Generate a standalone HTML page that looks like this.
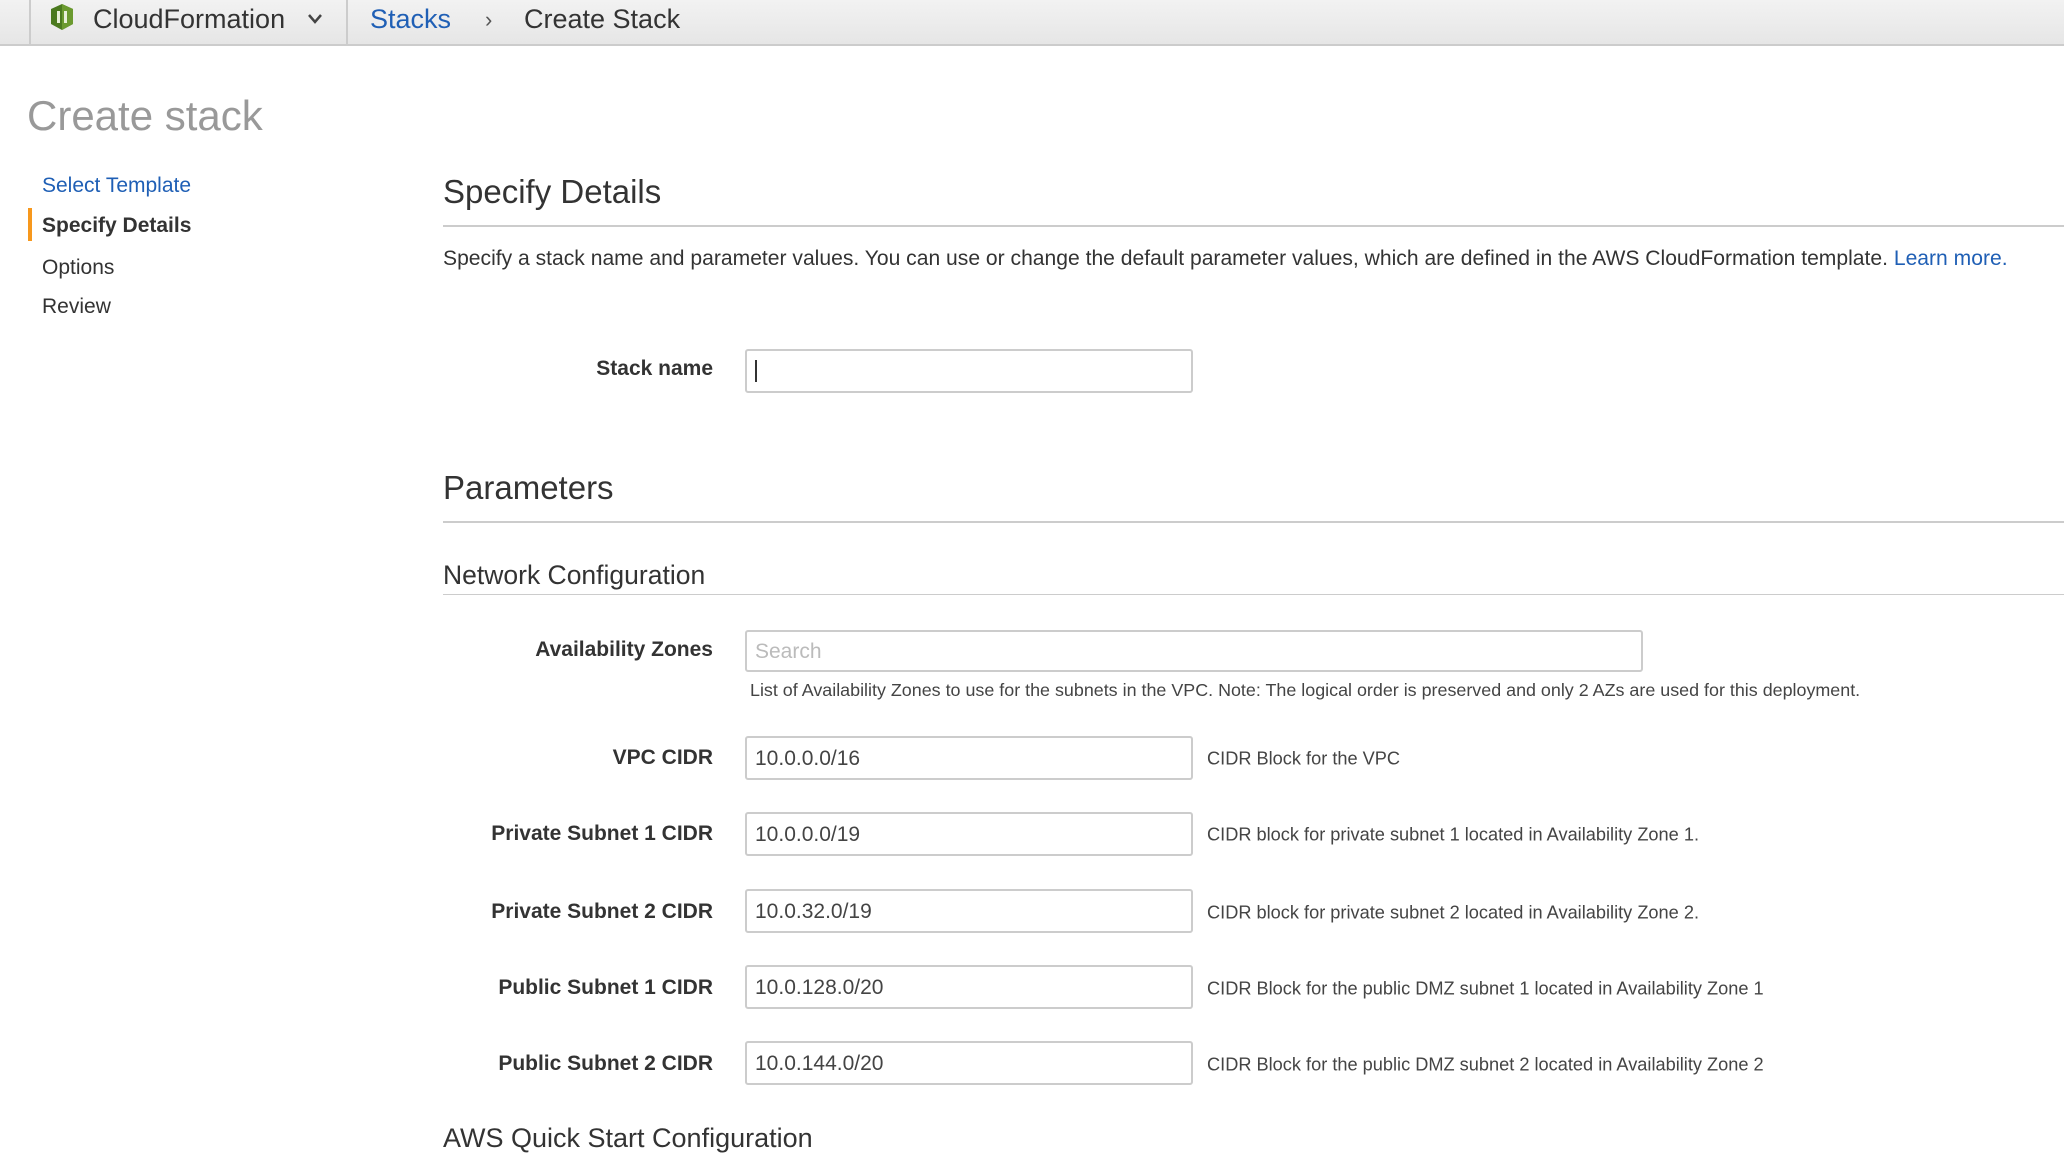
<!DOCTYPE html>
<html><head><meta charset="utf-8"><style>
*{margin:0;padding:0;box-sizing:border-box}
body{width:2064px;height:1150px;overflow:hidden;background:#fff;font-family:"Liberation Sans",Arial,sans-serif;color:#333;position:relative}
.a{position:absolute;white-space:nowrap}
.hdr{position:absolute;left:0;top:0;width:2064px;height:46px;background:linear-gradient(#f2f2f2,#e6e6e6);border-bottom:2px solid #ccc}
.lbl{position:absolute;right:1351px;font-weight:bold;font-size:21px;color:#333;transform:translateY(-45%)}
.inp{position:absolute;left:745px;width:448px;height:44px;border:2px solid #ccc;border-radius:3px;background:#fff;font-size:21px;color:#444;padding:9px 8px}
.help{position:absolute;left:1207px;font-size:18.2px;color:#444;transform:translateY(-45%)}
.hr{position:absolute;left:443px;right:0;height:2px;background:#ccc}
</style></head><body>
<div class="hdr"></div>
<div class="a" style="left:29px;top:0;width:2px;height:44px;background:#ccc"></div>
<div class="a" style="left:346px;top:0;width:2px;height:44px;background:#ccc"></div>
<svg class="a" style="left:50px;top:4px" width="24" height="26" viewBox="0 0 24 26"><path d="M12 0L23 5V20L12 26L1 20V5Z" fill="#4b7a1f"/><path d="M12 0L23 5V20L12 26Z" fill="#6b9a2f"/><rect x="7" y="7" width="3" height="12" fill="#e8f0d8"/><rect x="14" y="7" width="3" height="12" fill="#e8f0d8"/></svg>
<div class="a" style="left:93px;top:4px;font-size:27px;color:#333">CloudFormation</div>
<svg class="a" style="left:307px;top:13px" width="16" height="12" viewBox="0 0 16 12"><path d="M2 2L8 9L14 2" stroke="#444" stroke-width="2.5" fill="none"/></svg>
<div class="a" style="left:370px;top:4px;font-size:27px;color:#1f5fb5">Stacks</div>
<div class="a" style="left:485px;top:7px;font-size:22px;color:#555">›</div>
<div class="a" style="left:524px;top:4px;font-size:27px;color:#333">Create Stack</div>
<div class="a" style="left:27px;top:92px;font-size:42px;color:#999">Create stack</div>
<div class="a" style="left:42px;top:174px;font-size:21px;color:#1f5fb5">Select Template</div>
<div class="a" style="left:28px;top:208px;width:4px;height:33px;background:#f7981d"></div>
<div class="a" style="left:42px;top:214px;font-size:21px;font-weight:bold;color:#333">Specify Details</div>
<div class="a" style="left:42px;top:256px;font-size:21px;color:#333">Options</div>
<div class="a" style="left:42px;top:295px;font-size:21px;color:#333">Review</div>
<div class="a" style="left:443px;top:173px;font-size:33px;color:#333">Specify Details</div>
<div class="hr" style="top:225px"></div>
<div class="a" style="left:443px;top:247px;font-size:21.1px;color:#333">Specify a stack name and parameter values. You can use or change the default parameter values, which are defined in the AWS CloudFormation template. <span style="color:#1f5fb5">Learn more.</span></div>
<div class="lbl" style="top:368px">Stack name</div>
<div class="inp" style="top:349px"><span style="display:inline-block;width:2px;height:22px;background:#333"></span></div>
<div class="a" style="left:443px;top:469px;font-size:33px;color:#333">Parameters</div>
<div class="hr" style="top:521px"></div>
<div class="a" style="left:443px;top:560px;font-size:26.5px;color:#333">Network Configuration</div>
<div class="hr" style="top:594px;height:1px"></div>
<div class="lbl" style="top:649px">Availability Zones</div>
<div class="inp" style="top:630px;width:898px;height:42px;color:#bbb;padding-top:8px">Search</div>
<div class="a" style="left:750px;top:680px;font-size:17.9px;color:#444">List of Availability Zones to use for the subnets in the VPC. Note: The logical order is preserved and only 2 AZs are used for this deployment.</div>
<div class="lbl" style="top:757px">VPC CIDR</div><div class="inp" style="top:736px">10.0.0.0/16</div><div class="help" style="top:758px">CIDR Block for the VPC</div>
<div class="lbl" style="top:833px">Private Subnet 1 CIDR</div><div class="inp" style="top:812px">10.0.0.0/19</div><div class="help" style="top:834px">CIDR block for private subnet 1 located in Availability Zone 1.</div>
<div class="lbl" style="top:911px">Private Subnet 2 CIDR</div><div class="inp" style="top:889px">10.0.32.0/19</div><div class="help" style="top:912px">CIDR block for private subnet 2 located in Availability Zone 2.</div>
<div class="lbl" style="top:987px">Public Subnet 1 CIDR</div><div class="inp" style="top:965px">10.0.128.0/20</div><div class="help" style="top:988px">CIDR Block for the public DMZ subnet 1 located in Availability Zone 1</div>
<div class="lbl" style="top:1063px">Public Subnet 2 CIDR</div><div class="inp" style="top:1041px">10.0.144.0/20</div><div class="help" style="top:1064px">CIDR Block for the public DMZ subnet 2 located in Availability Zone 2</div>
<div class="a" style="left:443px;top:1123px;font-size:27px;color:#333">AWS Quick Start Configuration</div>
</body></html>
